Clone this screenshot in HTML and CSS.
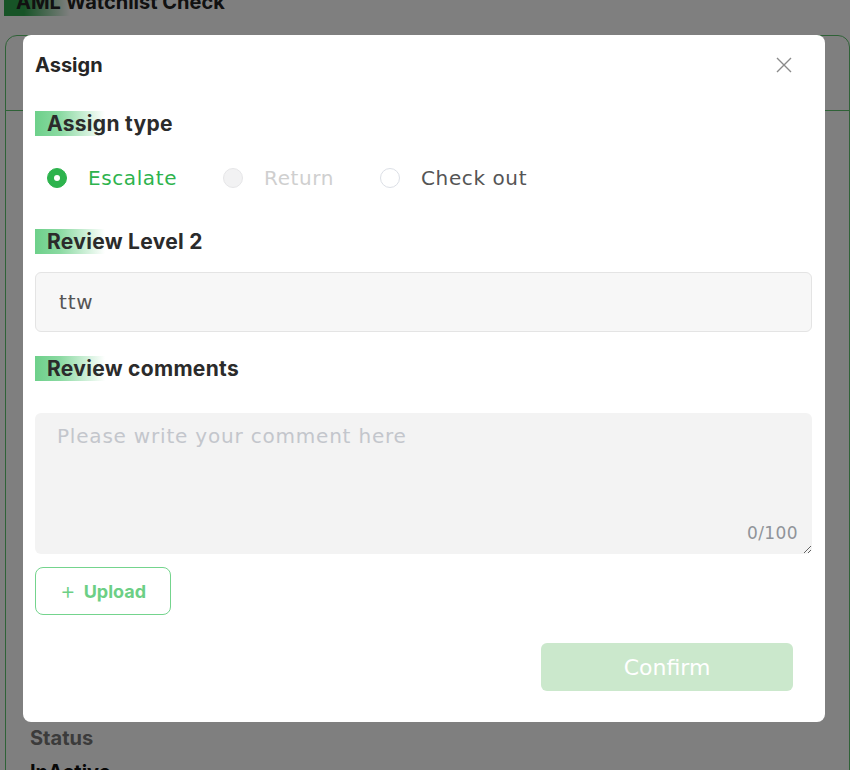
FILE: index.html
```html
<!DOCTYPE html>
<html lang="en">
<head>
<meta charset="utf-8">
<title>Assign</title>
<link rel="stylesheet" href="styles.css">
</head>
<body>
<div class="page">
  <h1 class="page-title">AML Watchlist Check</h1>
  <div class="card">
    <div class="card-head"></div>
    <div class="card-body">
      <div class="field-name">Status</div>
      <div class="field-value">InActive</div>
    </div>
  </div>
</div>
<div class="overlay"></div>
<div class="modal" role="dialog">
  <div class="modal-head">
    <span class="modal-title">Assign</span>
    <button class="close" aria-label="Close">
      <svg width="16" height="16" viewBox="0 0 16 16"><path d="M1 1L15 15M15 1L1 15" stroke="#8a8a8a" stroke-width="1.4" fill="none"/></svg>
    </button>
  </div>
  <div class="modal-body">
    <div class="section-label">Assign type</div>
    <div class="radio-group">
      <label class="radio checked"><span class="dot"></span><span class="radio-text">Escalate</span></label>
      <label class="radio disabled"><span class="dot"></span><span class="radio-text">Return</span></label>
      <label class="radio"><span class="dot"></span><span class="radio-text">Check out</span></label>
    </div>
    <div class="section-label gap-level">Review Level 2</div>
    <input class="text-input" value="ttw" readonly>
    <div class="section-label gap-comments">Review comments</div>
    <div class="textarea-wrap">
      <textarea class="textarea" placeholder="Please write your comment here"></textarea>
      <span class="counter">0/100</span>
    </div>
    <button class="upload"><span class="plus">+</span>Upload</button>
  </div>
  <div class="modal-foot">
    <button class="confirm">Confirm</button>
  </div>
</div>
</body>
</html>
```
FILE: styles.css
```css
* { box-sizing: border-box; }
html, body { margin: 0; padding: 0; }
body {
  width: 850px;
  height: 770px;
  overflow: hidden;
  background: #ffffff;
  font-family: "Inter", "Liberation Sans", sans-serif;
  color: #222;
}
.page { padding: 0 0 0 5px; }
.page-title {
  margin: -12px 0 0 -1px;
  padding-left: 12px;
  font-size: 20px;
  line-height: 28px;
  font-weight: 700;
  color: #222;
  background: linear-gradient(90deg, #2fa84f 0, #2fa84f 20px, rgba(255,255,255,0) 66px) no-repeat;
  background-size: 66px 100%;
}
.card {
  margin-top: 19px;
  border: 1px solid #5fc46f;
  border-radius: 12px;
  height: 900px;
}
.card-head {
  height: 75px;
  border-bottom: 1px solid #5fc46f;
}
.card-body { padding: 614px 0 0 24px; }
.field-name { font-size: 20px; font-weight: 700; color: #777; line-height: 26px; }
.field-value { font-size: 20px; font-weight: 700; color: #111; line-height: 26px; margin-top: 8px; }

.overlay {
  position: fixed;
  inset: 0;
  background: rgba(0, 0, 0, 0.5);
}
.modal {
  position: fixed;
  left: 23px;
  top: 35px;
  width: 802px;
  height: 687px;
  background: #fff;
  border-radius: 8px;
  padding: 0 13px 0 12px;
  display: flex;
  flex-direction: column;
}
.modal-head {
  display: flex;
  align-items: center;
  justify-content: space-between;
  padding: 19px 0 17px 0;
}
.modal-title {
  font-size: 20px;
  line-height: 22px;
  font-weight: 700;
  color: #262626;
}
.close {
  border: 0;
  background: none;
  padding: 0;
  margin-right: 20px;
  width: 16px;
  height: 16px;
  display: flex;
}
.modal-body { display: flex; flex-direction: column; align-items: flex-start; }
.section-label {
  margin-top: 18px;
  height: 25px;
  line-height: 25px;
  padding-left: 12px;
  font-size: 21px;
  letter-spacing: 0.3px;
  font-weight: 700;
  color: #2b2b2b;
  background: linear-gradient(90deg, #6dd08a 0, rgba(109,208,138,0.8) 25px, rgba(255,255,255,0) 70px) no-repeat;
  background-size: 70px 100%;
}
.gap-level { margin-top: 39px; }
.gap-comments { margin-top: 24px; }

.radio-group {
  display: flex;
  margin-top: 30px;
  height: 24px;
  align-items: center;
  padding-left: 12px;
}
.radio { display: flex; align-items: center; margin-right: 46px; }
.dot {
  width: 20px;
  height: 20px;
  border-radius: 50%;
  border: 1px solid #dcdfe6;
  background: #fff;
  display: inline-block;
  position: relative;
}
.radio-text {
  margin-left: 21px;
  font-family: "DejaVu Sans", sans-serif;
  font-size: 20px;
  color: #555;
  letter-spacing: 0.6px;
}
.radio.checked .dot { background: #2db34d; border-color: #2db34d; }
.radio.checked .dot::after {
  content: "";
  position: absolute;
  left: 6px; top: 6px;
  width: 6px; height: 6px;
  border-radius: 50%;
  background: #fff;
}
.radio.checked .radio-text { color: #2db34d; }
.radio.disabled .dot { background: #f2f2f3; border-color: #e6e6e8; }
.radio.disabled .radio-text { color: #cfcfcf; }

.text-input {
  margin-top: 18px;
  width: 777px;
  height: 60px;
  background: #f7f7f7;
  border: 1px solid #e4e4e4;
  border-radius: 6px;
  padding: 0 23px;
  font-family: "DejaVu Sans", sans-serif;
  font-size: 20px;
  letter-spacing: 0.8px;
  color: #555;
  outline: none;
}
.textarea-wrap {
  position: relative;
  margin-top: 32px;
  width: 777px;
  height: 141px;
}
.textarea {
  width: 777px;
  height: 141px;
  display: block;
  border: 0;
  background: #f3f3f3;
  border-radius: 6px;
  padding: 10px 22px;
  font-family: "DejaVu Sans", sans-serif;
  font-size: 20px;
  letter-spacing: 0.8px;
  line-height: 26px;
  color: #555;
  resize: vertical;
  outline: none;
}
.textarea::placeholder { color: #c3c6cc; }
.counter {
  position: absolute;
  right: 14px;
  bottom: 11px;
  font-family: "DejaVu Sans", sans-serif;
  font-size: 17px;
  letter-spacing: 0.4px;
  color: #909399;
}
.upload {
  margin-top: 13px;
  width: 136px;
  height: 48px;
  background: #fff;
  border: 1px solid #74d48d;
  border-radius: 8px;
  color: #6ccf85;
  font-family: "Inter", sans-serif;
  font-weight: 700;
  font-size: 18px;
  display: flex;
  align-items: center;
  justify-content: center;
}
.plus {
  font-weight: 300;
  font-size: 24px;
  margin-right: 8px;
  line-height: 1;
}
.modal-foot {
  display: flex;
  justify-content: flex-end;
  margin-top: 28px;
  padding-right: 19px;
}
.confirm {
  width: 252px;
  height: 48px;
  border: 0;
  border-radius: 6px;
  background: #cbe8cc;
  color: #fff;
  font-family: "DejaVu Sans", sans-serif;
  font-size: 22px;
}
```
